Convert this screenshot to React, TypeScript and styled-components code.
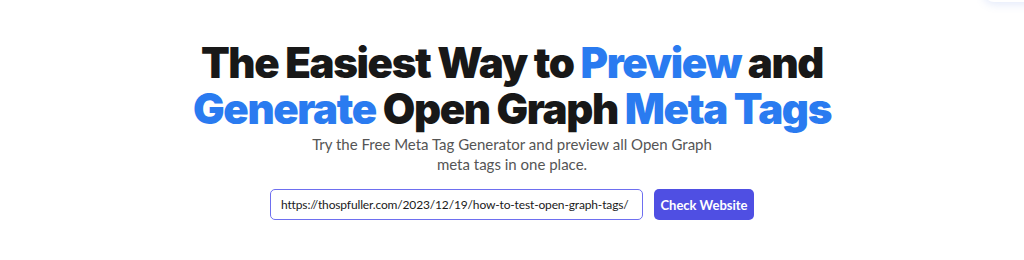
import React from "react";
import styled, { createGlobalStyle } from "styled-components";

const Global = createGlobalStyle`
  html, body { margin: 0; padding: 0; background: #ffffff; }
  body { font-family: "Inter", "Noto Sans", sans-serif; overflow: hidden; }
  * { box-sizing: border-box; }
`;

const Page = styled.main`
  position: relative;
  width: 1024px;
  height: 260px;
  display: flex;
  flex-direction: column;
  align-items: center;
  padding-top: 40px;
`;

const CornerCard = styled.div`
  position: absolute;
  top: -40px;
  right: -20px;
  width: 60px;
  height: 42px;
  border-radius: 10px;
  background: #ffffff;
  box-shadow: 0 2px 10px rgba(90, 130, 230, 0.18);
`;

const Heading = styled.h1`
  margin: 0;
  font-family: "Inter", sans-serif;
  font-weight: 900;
  font-size: 42px;
  line-height: 46px;
  letter-spacing: -1.4px;
  color: #181818;
  text-align: center;
`;

const Line = styled.span`
  display: block;
`;

const Accent = styled.span`
  color: #2a7bf0;
`;

const Subtitle = styled.p`
  margin: 2px 0 0;
  width: 420px;
  font-family: "Lato", sans-serif;
  font-size: 15px;
  line-height: 20px;
  color: #555555;
  text-align: center;
`;

const Form = styled.form`
  margin-top: 15px;
  display: flex;
  gap: 11px;
`;

const UrlInput = styled.input`
  width: 373px;
  height: 31px;
  padding: 0 10px;
  border: 1.5px solid #6e6ff0;
  border-radius: 5px;
  font-family: "Lato", sans-serif;
  font-size: 12px;
  letter-spacing: -0.15px;
  color: #1a1a1a;
  outline: none;
`;

const Button = styled.button`
  width: 100px;
  height: 31px;
  padding: 0;
  border: none;
  border-radius: 5px;
  background: #4f4fe3;
  color: #ffffff;
  font-family: "Lato", sans-serif;
  font-size: 13px;
  font-weight: 700;
  white-space: nowrap;
  cursor: pointer;
`;

export default function App() {
  return (
    <>
      <Global />
      <Page>
        <CornerCard />
        <Heading>
          <Line>
            The Easiest Way to <Accent>Preview</Accent> and
          </Line>
          <Line>
            <Accent>Generate</Accent> Open Graph <Accent>Meta Tags</Accent>
          </Line>
        </Heading>
        <Subtitle>
          Try the Free Meta Tag Generator and preview all Open Graph meta tags in one place.
        </Subtitle>
        <Form onSubmit={(e) => e.preventDefault()}>
          <UrlInput defaultValue="https://thospfuller.com/2023/12/19/how-to-test-open-graph-tags/" />
          <Button type="submit">Check Website</Button>
        </Form>
      </Page>
    </>
  );
}
